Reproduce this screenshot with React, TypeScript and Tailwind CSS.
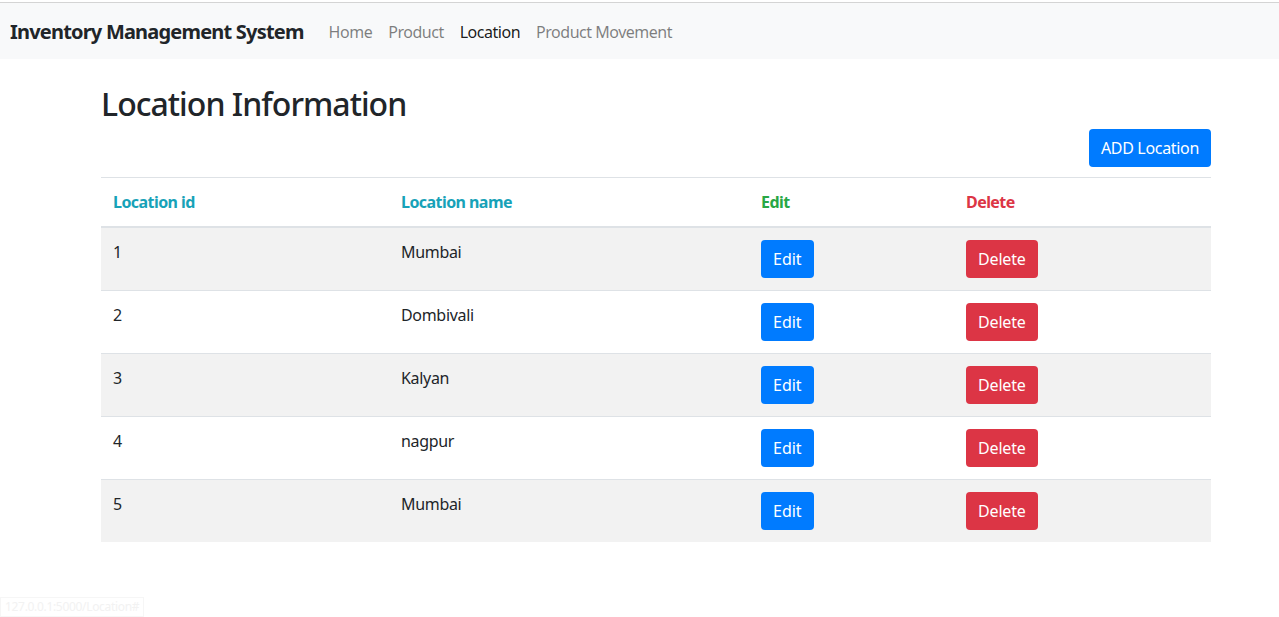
import React from 'react';

const locations = [
  { id: 1, name: 'Mumbai' },
  { id: 2, name: 'Dombivali' },
  { id: 3, name: 'Kalyan' },
  { id: 4, name: 'nagpur' },
  { id: 5, name: 'Mumbai' },
];

const navLinks = [
  { label: 'Home', active: false },
  { label: 'Product', active: false },
  { label: 'Location', active: true },
  { label: 'Product Movement', active: false },
];

const App: React.FC = () => {
  return (
    <div className="min-h-[617px] bg-white text-[#212529] text-base tracking-[-0.02em]" style={{ fontFamily: '"Noto Sans", "Open Sans", sans-serif' }}>
      <div className="h-[3px] border-b border-[#d4d4d4]" />
      <nav className="flex items-center h-[56px] bg-[#f8f9fa] px-[10px] pt-[2px]">
        <span className="text-[20px] font-bold leading-[30px] mr-[17px] tracking-[-0.04em]">Inventory Management System</span>
        <ul className="flex tracking-[-0.03em]">
          {navLinks.map(link => (
            <li key={link.label}>
              <a href="#" className={`px-2 leading-6 ${link.active ? 'text-black/90' : 'text-black/50'}`}>
                {link.label}
              </a>
            </li>
          ))}
        </ul>
      </nav>

      <main className="ml-[101px] w-[1110px]">
        <h1 className="text-[32px] font-medium leading-[38px] mt-[26px] tracking-[-0.03em]">Location Information</h1>
        <div className="flex justify-end mt-[6px] mb-[10px]">
          <button className="bg-[#007bff] text-white rounded px-3 h-[38px] leading-6">ADD Location</button>
        </div>
        <table className="w-full border-collapse">
          <thead>
            <tr className="border-t border-[#dee2e6] border-b-2">
              <th className="w-[288px] text-left p-3 font-bold text-[#17a2b8] align-bottom tracking-[-0.035em]">Location id</th>
              <th className="w-[360px] text-left p-3 font-bold text-[#17a2b8] align-bottom tracking-[-0.035em]">Location name</th>
              <th className="w-[205px] text-left p-3 font-bold text-[#28a745] align-bottom tracking-[-0.035em]">Edit</th>
              <th className="text-left p-3 font-bold text-[#dc3545] align-bottom tracking-[-0.035em]">Delete</th>
            </tr>
          </thead>
          <tbody>
            {locations.map((loc, i) => (
              <tr key={loc.id} className={`${i > 0 ? 'border-t border-[#dee2e6]' : ''} ${i % 2 === 0 ? 'bg-[#f2f2f2]' : 'bg-white'}`}>
                <td className="p-3 align-top leading-6">{loc.id}</td>
                <td className="p-3 align-top leading-6">{loc.name}</td>
                <td className="p-3 align-top">
                  <button className="bg-[#007bff] text-white rounded px-3 h-[38px] leading-6 tracking-normal">Edit</button>
                </td>
                <td className="p-3 align-top">
                  <button className="bg-[#dc3545] text-white rounded px-3 h-[38px] leading-6 tracking-[-0.01em]">Delete</button>
                </td>
              </tr>
            ))}
          </tbody>
        </table>
      </main>

      <div className="fixed left-0 bottom-0 px-1 border border-[#f6f6f6] bg-white text-[12px] text-[#f2f2f2]">127.0.0.1:5000/Location#</div>
    </div>
  );
};

export default App;
